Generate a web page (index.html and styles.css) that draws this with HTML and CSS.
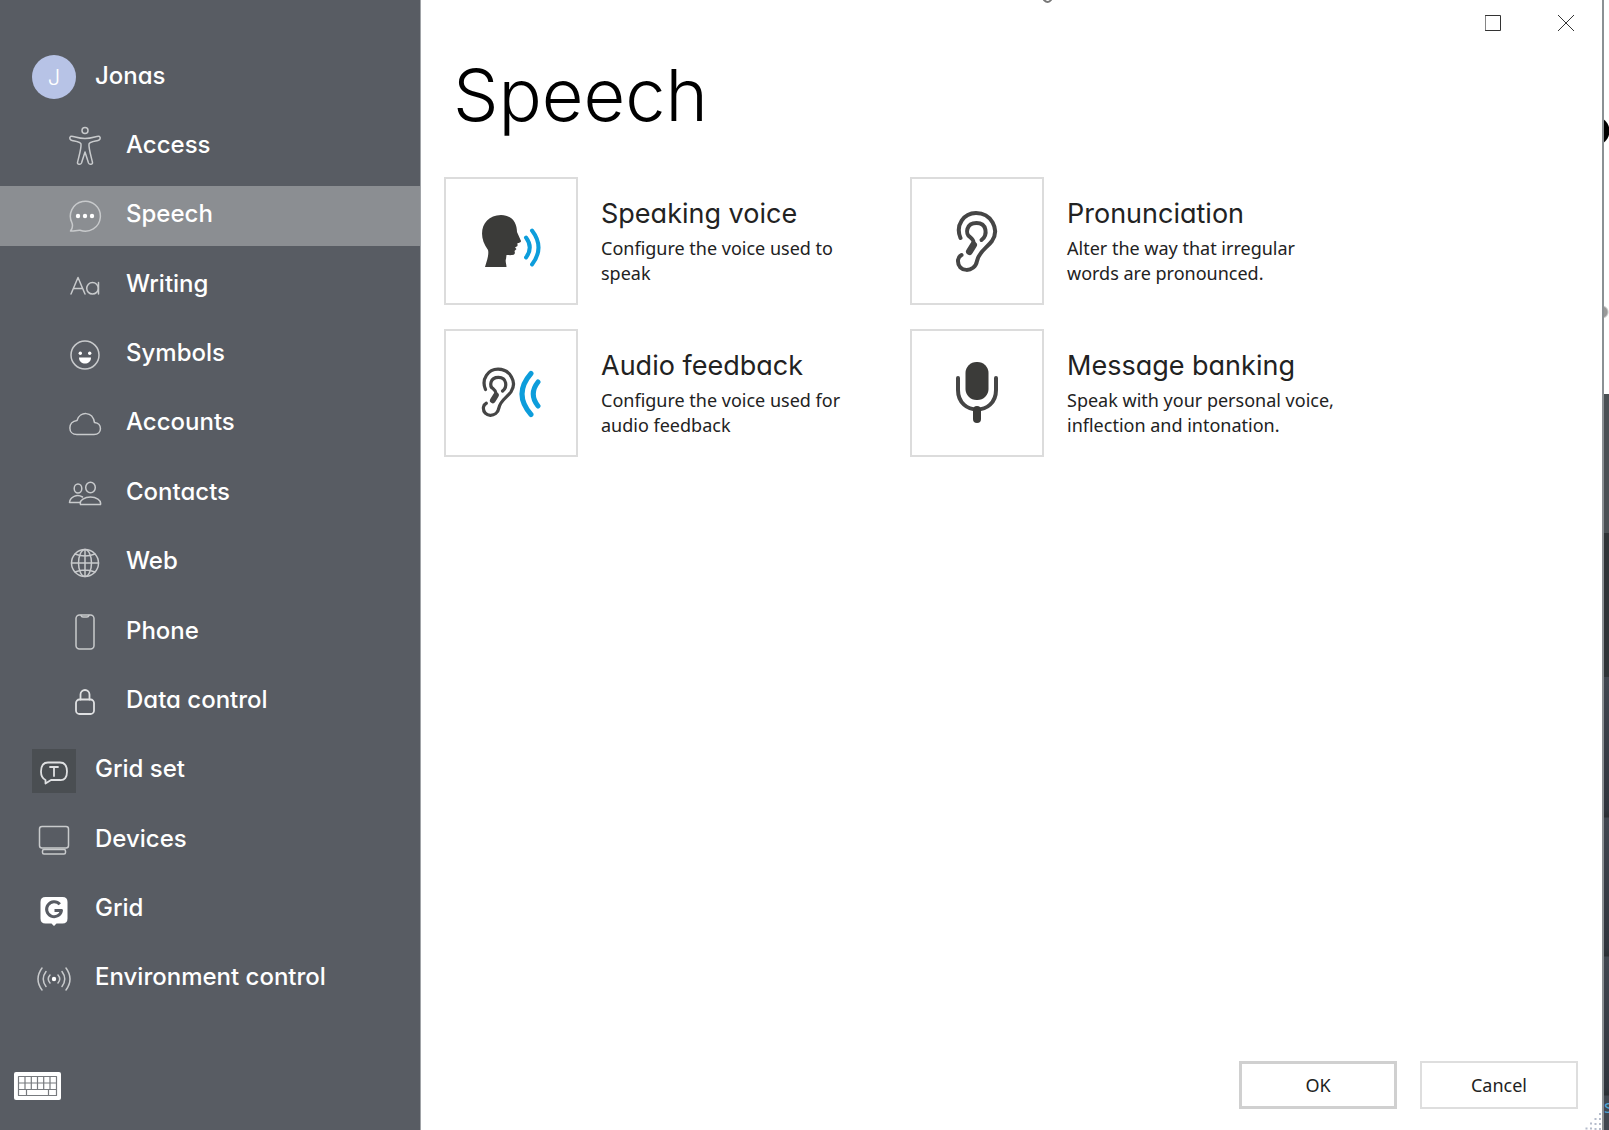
FILE: index.html
```html
<!DOCTYPE html>
<html lang="en">
<head>
<meta charset="utf-8">
<title>Speech</title>
<link rel="stylesheet" href="styles.css">
</head>
<body>
<div class="dialog">
  <aside class="sidebar">
    <nav class="nav">
      <a class="item top" href="#"><span class="icon avatar">J</span><span class="label">Jonas</span></a>
      <a class="item" href="#"><span class="icon"><svg width="34" height="40" viewBox="0 0 34 40"><circle cx="17" cy="4.500" r="3"/><path d="M2.500 10.500C1 12 2 14 4 14.500C8 15.500 12.500 16 13 18C13.500 22 11 30 9.500 36.500C9.200 38.500 12.500 39 13.500 37L17 26L20.500 37C21.500 39 24.800 38.500 24.500 36.500C23 30 20.500 22 21 18C21.500 16 26 15.500 30 14.500C32 14 33 12 31.500 10.500C29 9.500 25 12.500 17 12.500S5 9.500 2.500 10.500Z"/></svg></span><span class="label">Access</span></a>
      <a class="item active" href="#"><span class="icon"><svg width="34" height="34" viewBox="0 0 34 34"><path d="M4 24A15 15 0 1 1 12 31.200C8 31 6 32.500 2.500 32C5 29 5 27 4 24Z"/><g class="solid"><circle cx="10" cy="17" r="2.200"/><circle cx="17" cy="17" r="2.200"/><circle cx="24" cy="17" r="2.200"/></g></svg></span><span class="label">Speech</span></a>
      <a class="item" href="#"><span class="icon"><svg width="34" height="34" viewBox="0 0 34 34"><path d="M3 26L10 9.500L17 26M5.500 20.500H14.500M30.500 14.500V26"/><circle cx="24.500" cy="20.300" r="5.800"/></svg></span><span class="label">Writing</span></a>
      <a class="item" href="#"><span class="icon"><svg width="34" height="34" viewBox="0 0 34 34"><circle cx="17" cy="17" r="14"/><g class="solid"><circle cx="12.300" cy="15.300" r="1.700"/><circle cx="21.700" cy="15.300" r="1.700"/><path d="M11 19.500H23C23 27.500 11 27.500 11 19.500Z"/></g></svg></span><span class="label">Symbols</span></a>
      <a class="item" href="#"><span class="icon"><svg width="34" height="34" viewBox="0 0 34 34"><path d="M9 27.500C-.5 27.500-.5 14.500 9 13.500C12 4 24.500 4 26.500 15.500C34.500 16 34.500 27.500 26 27.500Z"/></svg></span><span class="label">Accounts</span></a>
      <a class="item" href="#"><span class="icon"><svg width="34" height="34" viewBox="0 0 34 34"><ellipse cx="10" cy="12.500" rx="3.800" ry="4.500"/><ellipse cx="22.500" cy="11.500" rx="4.800" ry="5.200"/><path d="M12 26.500H1.500C2 21 9 17.500 14.500 21M12.500 28.500C11 24 17 21 22.500 21S33.500 24 32.500 28.500Z"/></svg></span><span class="label">Contacts</span></a>
      <a class="item" href="#"><span class="icon"><svg width="34" height="34" viewBox="0 0 34 34"><circle cx="17" cy="17" r="13.500"/><ellipse cx="17" cy="17" rx="6.500" ry="13.500"/><path d="M17 3.500V30.500M3.500 17H30.500M7 8Q17 12 27 8M7 26Q17 22 27 26"/></svg></span><span class="label">Web</span></a>
      <a class="item" href="#"><span class="icon"><svg width="34" height="36" viewBox="0 0 34 36"><rect x="8" y="1" width="18" height="34" rx="3.500"/><path d="M13 1.500Q13.500 3 15 3H19Q20.500 3 21 1.500"/></svg></span><span class="label">Phone</span></a>
      <a class="item" href="#"><span class="icon"><svg class="strong" width="34" height="34" viewBox="0 0 34 34"><rect x="8" y="15.500" width="18" height="14.500" rx="3.500"/><path d="M12.500 15.500V10.500A4.500 4.500 0 0 1 21.500 10.500V15.500"/></svg></span><span class="label">Data control</span></a>
      <a class="item top" href="#"><span class="icon gridset"><svg class="strong" width="34" height="34" viewBox="0 0 34 34"><path d="M11 8.500H23Q30 8.500 30 17.500T23 26H14L8.500 29.500V26Q4 24 4 17.500Q4 8.500 11 8.500ZM13 13H21M17 13V22"/></svg></span><span class="label">Grid set</span></a>
      <a class="item top" href="#"><span class="icon"><svg width="34" height="34" viewBox="0 0 34 34"><rect x="2.500" y="3.500" width="29" height="21.500" rx="2.500"/><rect x="5.500" y="26.500" width="23" height="4.500" rx="1.500"/></svg></span><span class="label">Devices</span></a>
      <a class="item top" href="#"><span class="icon"><svg width="34" height="34" viewBox="0 0 34 34"><path class="solid" d="M8.500 4H25.500Q30.500 4 30.500 9V25.500Q30.500 30.500 25.500 30.500H19.500L17 33L14.500 30.500H8.500Q3.500 30.500 3.500 25.500V9Q3.500 4 8.500 4Z"/><path class="cut" d="M22.800 11.300A7.500 7.500 0 1 0 24.500 17.500H17.500"/></svg></span><span class="label">Grid</span></a>
      <a class="item top" href="#"><span class="icon"><svg width="36" height="34" viewBox="0 0 36 34"><circle class="solid" cx="18" cy="17" r="2.200"/><path d="M14 13Q10.500 17 14 21M10 9.500Q4.500 17 10 24.500M6 6Q-2 17 6 28M22 13Q25.500 17 22 21M26 9.500Q31.500 17 26 24.500M30 6Q38 17 30 28"/></svg></span><span class="label">Environment control</span></a>
    </nav>
    <footer class="tools">
      <button class="keyboard" type="button" aria-label="Keyboard"><svg width="47" height="28" viewBox="0 0 47 28"><rect class="solid" width="47" height="28" rx="2"/><path class="keys" d="M4.500 4.500H42.500V23.500H4.500ZM4.500 11H42.500M4.500 17.500H42.500M11 4.500V17.500M17.300 4.500V17.500M23.500 4.500V17.500M29.700 4.500V17.500M36 4.500V17.500M12.500 17.500V23.500M34.500 17.500V23.500"/></svg></button>
    </footer>
  </aside>
  <main class="main">
    <svg class="remnant" width="10" height="3" viewBox="0 0 10 3" aria-hidden="true"><path d="M1 0Q5 4 8 0"/></svg>
    <header class="titlebar">
      <button type="button" aria-label="Maximize"><svg width="16" height="16" viewBox="0 0 16 16"><rect x=".5" y=".5" width="15" height="15"/></svg></button>
      <button type="button" aria-label="Close"><svg width="16" height="16" viewBox="0 0 16 16"><path d="M0 0L16 16M16 0L0 16"/></svg></button>
    </header>
    <h1>Speech</h1>
    <div class="cards">
      <a class="card" href="#">
        <span class="tile"><svg width="60" height="60" viewBox="0 0 60 60"><path class="ink" d="M4 56C6.500 48 8 43 7 39C-5 23 2 4 20 4C31 4 36 12 36 21L40 30C40 31.500 38 32 36.500 32L36.500 35L34 36.500L35.500 38L33.500 40C35 44 32 44.500 25.500 44L25 48C24 50 25.500 53 25.500 56Z"/><path class="wave" d="M45 26.500Q52.500 36.500 45 46.500M51 19.500Q64 36.500 51 53.500"/></svg></span>
        <span class="copy"><strong>Speaking voice</strong><span>Configure the voice used to speak</span></span>
      </a>
      <a class="card" href="#">
        <span class="tile"><svg width="44" height="64" viewBox="0 0 44 64"><path class="ear" d="M5.500 29C0 16 9 4 21 4C36 4 45 20 37 32C32 39 24 42 22 52C20 64 2 64 3 51Q3.500 47.500 6.500 46"/><path class="ear" d="M26.500 31C33 26 32 14 21.500 14C11 14 10 25 15 28C20 32 19 35 16 39"/><path class="lobe" d="M18.500 36L14.500 42.500"/></svg></span>
        <span class="copy"><strong>Pronunciation</strong><span>Alter the way that irregular words are pronounced.</span></span>
      </a>
      <a class="card" href="#">
        <span class="tile"><svg width="60" height="52" viewBox="0 0 60 52"><g transform="translate(0 -1) scale(.81)"><path class="ear" d="M5.500 29C0 16 9 4 21 4C36 4 45 20 37 32C32 39 24 42 22 52C20 64 2 64 3 51Q3.500 47.500 6.500 46"/><path class="ear" d="M26.500 31C33 26 32 14 21.500 14C11 14 10 25 15 28C20 32 19 35 16 39"/><path class="lobe" d="M18.500 36L14.500 42.500"/></g><path class="wave bold" d="M50 6.500Q32 27 50 47.500M57 15Q47.500 27 57 39"/></svg></span>
        <span class="copy"><strong>Audio feedback</strong><span>Configure the voice used for audio feedback</span></span>
      </a>
      <a class="card" href="#">
        <span class="tile"><svg width="44" height="64" viewBox="0 0 44 64"><rect class="ink" x="10.500" y="1" width="23" height="38" rx="11"/><path class="ear" d="M3 17V29C3 55 41 55 41 29V17"/><path class="stem" d="M22 49V58"/></svg></span>
        <span class="copy"><strong>Message banking</strong><span>Speak with your personal voice, inflection and intonation.</span></span>
      </a>
    </div>
    <footer class="actions">
      <button class="default" type="button">OK</button>
      <button type="button">Cancel</button>
    </footer>
    <svg class="grip" width="18" height="18" viewBox="0 0 18 18" aria-hidden="true"><path d="M16 1V18M11.500 6V18M7 10.500V18M2.500 15.500V18"/></svg>
  </main>
</div>
<div class="behind" aria-hidden="true"><span>s</span></div>
</body>
</html>
```
FILE: styles.css
```css
* { box-sizing: border-box; }
body {
  margin: 0;
  min-height: 100vh;
  display: flex;
  font-family: "Noto Sans", "Open Sans", sans-serif;
  font-size: 18px;
  line-height: 25px;
  color: #222;
  background: #fff;
}
a { color: inherit; text-decoration: none; }
button { font: inherit; color: inherit; background: none; border: 0; padding: 0; }
svg { display: block; fill: none; stroke-linecap: round; stroke-linejoin: round; }

.dialog { flex: 1; display: flex; border-right: 2px solid #8b9094; }

.sidebar {
  width: 421px;
  flex: none;
  display: flex;
  flex-direction: column;
  background: #585c63;
  border-right: 1px solid #a0a3a7;
  color: #fff;
}
.nav {
  flex: 1;
  display: flex;
  flex-direction: column;
  justify-content: space-between;
  padding-top: 47px;
  font-family: Inter, Lato, sans-serif;
  font-feature-settings: "cv11";
  font-size: 24px;
  font-weight: 500;
}
.item {
  height: 60px;
  display: flex;
  align-items: center;
  gap: 19px;
  padding-left: 63px;
}
.item.top { padding-left: 32px; }
.item.active { background: #8b8e92; }
.label { padding-bottom: 4px; }
.icon {
  width: 44px;
  height: 44px;
  display: flex;
  align-items: center;
  justify-content: center;
}
.icon svg { stroke: #c8cacc; stroke-width: 1.5; }
.icon svg.strong { stroke: #dfe0e2; stroke-width: 1.8; }
.sidebar .solid { fill: #fff; stroke: none; }
.icon .cut { stroke: #585c63; stroke-width: 3; stroke-linecap: butt; }
.avatar { border-radius: 50%; background: #b7c3e6; font-size: 22px; font-weight: 300; }
.gridset { background: #4a4e52; }

.tools { height: 121px; padding: 63px 14px 0; }
.keys { stroke: #777a7e; stroke-width: 1.2; }

.main { flex: 1; position: relative; display: flex; flex-direction: column; background: #fff; }
.titlebar { display: flex; justify-content: flex-end; height: 46px; }
.titlebar button { width: 73px; display: grid; place-items: center; }
.titlebar svg { stroke: #333; stroke-width: 1; }

h1 {
  margin: 0;
  padding: 4px 32px 0;
  height: 131px;
  font: 300 72px/90px Inter, Lato, sans-serif;
  color: #000;
}
.cards {
  display: grid;
  grid-template-columns: repeat(2, 466px);
  row-gap: 24px;
  padding-left: 23px;
}
.card { display: flex; gap: 23px; }
.tile {
  width: 134px;
  height: 128px;
  flex: none;
  display: grid;
  place-items: center;
  border: 2px solid #dcdcdc;
}
.copy { width: 270px; padding-top: 21px; }
.copy span { display: block; }
.copy strong {
  display: block;
  margin-bottom: 6px;
  font: 400 27px/32px Inter, Lato, sans-serif;
  font-feature-settings: "cv11";
}
.ink { fill: #3b3b39; }
.ear { stroke: #454545; stroke-width: 4; }
.lobe { stroke: #454545; stroke-width: 7; }
.stem { stroke: #3b3b39; stroke-width: 8; }
.wave { stroke: #0d9ddb; stroke-width: 4; }
.wave.bold { stroke-width: 5; }

.actions {
  margin-top: auto;
  display: flex;
  justify-content: flex-end;
  gap: 23px;
  padding: 0 24px 21px;
}
.actions button { width: 158px; height: 48px; border: 2px solid #dedede; }
.actions .default { border: 3px solid #d0d0d0; }

.remnant { position: absolute; top: 0; left: 622px; stroke: #777; stroke-width: 2; }
.grip { position: absolute; right: 0; bottom: 0; }
.grip path { stroke: #b5bccb; stroke-width: 2; stroke-dasharray: 2 3; stroke-linecap: butt; }

.behind {
  width: 5px;
  display: flex;
  flex-direction: column;
  justify-content: flex-end;
  overflow: hidden;
  padding-bottom: 11px;
  color: #4fa3d1;
  background:
    radial-gradient(circle at -9px 131px, #000 14px, transparent 15px),
    radial-gradient(circle at -2px 312px, #999 5px, transparent 7px),
    linear-gradient(#fff 394px, #4a5054 394px, #4a5054 533px, #2e3336 533px, #2e3336 677px, #40464f 677px, #2f343c 810px, #2a2e32 817px, #40464f 818px, #2f343c 948px, #2a2e32 956px, #40464f 957px, #2f343c 1088px, #2a2e32 1095px, #40464f 1096px);
}
```
